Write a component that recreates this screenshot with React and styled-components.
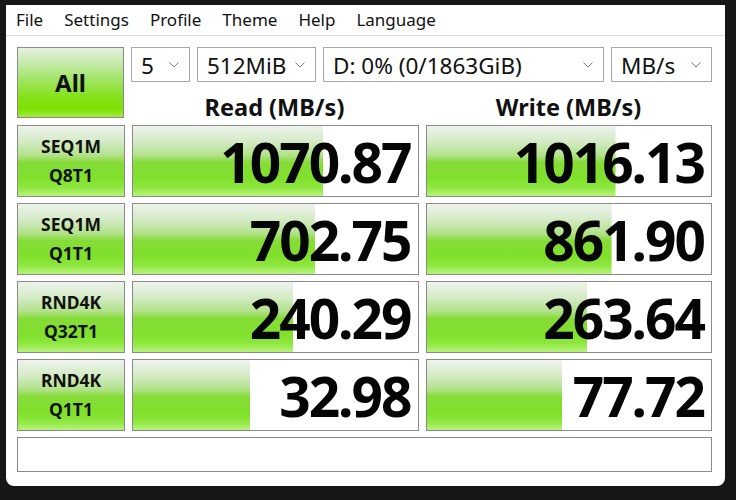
import React from 'react';
import styled, { createGlobalStyle } from 'styled-components';

const Global = createGlobalStyle`
  html, body { margin: 0; padding: 0; background: #161616; }
  body { width: 736px; height: 500px; overflow: hidden; font-family: "Noto Sans", "Open Sans", sans-serif; }
  * { box-sizing: border-box; }
`;

const Page = styled.div`
  display: flex;
  width: 736px;
  height: 500px;
  padding-top: 5px;
`;

const Window = styled.div`
  margin-left: 6px;
  width: 719px;
  height: 481px;
  background: #ffffff;
  border-radius: 0 0 8px 8px;
  display: flex;
  flex-direction: column;
  overflow: hidden;
`;

const MenuBar = styled.div`
  height: 31px;
  border-bottom: 1px solid #d9d9d9;
  display: flex;
  align-items: center;
`;

const MenuItem = styled.span`
  padding: 0 11px 0 10px;
  font-size: 17px;
  color: #111;
  line-height: 30px;
`;

const Content = styled.div`
  padding: 11px 13px 0 11px;
  display: flex;
  flex-direction: column;
`;

const Top = styled.div`
  display: flex;
  gap: 7px;
  height: 71px;
`;

const greenBtn = `
  linear-gradient(to bottom,
    #eef3ec 0%, #d4ebc6 22%, #b2e18a 42%, #86dc38 52%, #80e02a 75%, #8ee840 88%, #b8f27c 100%)
`;

const AllButton = styled.div`
  width: 108px;
  height: 71px;
  border: 1px solid #8a8a8a;
  background: linear-gradient(to bottom, #e4efe0 0%, #c8ebb0 20%, #a2e468 45%, #86e21c 70%, #7fe000 88%, #a0ec40 100%);
  display: flex;
  align-items: center;
  justify-content: center;
  font-size: 24px;
  font-weight: 700;
  color: #111;
`;

const RightTop = styled.div`
  flex: 1;
  display: flex;
  flex-direction: column;
`;

const ComboRow = styled.div`
  display: flex;
  gap: 7px;
  height: 35px;
`;

const Combo = styled.div`
  width: ${p => p.$w}px;
  height: 35px;
  border: 1px solid #a8a8a8;
  background: #fff;
  display: flex;
  align-items: center;
  padding: 1px 10px 0 9px;
  font-size: 22.5px;
  color: #111;
`;

const ComboText = styled.span`
  flex: 1;
  white-space: nowrap;
`;

const Chevron = () => (
  <svg width="10" height="6" viewBox="0 0 10 6">
    <polyline points="0.5,0.5 5,5 9.5,0.5" fill="none" stroke="#808080" strokeWidth="1" />
  </svg>
);

const HeaderRow = styled.div`
  display: grid;
  grid-template-columns: 1fr 1fr;
  gap: 7px;
  height: 36px;
`;

const Header = styled.div`
  display: flex;
  align-items: center;
  justify-content: center;
  font-size: 23.5px;
  font-weight: 700;
  color: #111;
  padding-top: 9px;
`;

const Grid = styled.div`
  margin-top: 7px;
  display: grid;
  grid-template-columns: 108px 1fr 1fr;
  grid-auto-rows: 72px;
  gap: 6px 7px;
`;

const Label = styled.div`
  border: 1px solid #8a8a8a;
  background: ${greenBtn};
  display: flex;
  flex-direction: column;
  align-items: center;
  justify-content: center;
  font-size: 17.5px;
  font-weight: 700;
  line-height: 29px;
  color: #111;
`;

const Cell = styled.div`
  border: 1px solid #8a8a8a;
  background-color: #fff;
  background-image: ${greenBtn};
  background-repeat: no-repeat;
  background-size: ${p => p.$fill}% 100%;
  display: flex;
  align-items: center;
  justify-content: flex-end;
  padding-right: 7px;
  font-size: 55px;
  font-weight: 700;
  letter-spacing: -2px;
  color: #050505;
`;

const Status = styled.div`
  grid-column: 1 / -1;
  height: 35px;
  border: 1px solid #8a8a8a;
  background: #fff;
`;

const rows = [
  { a: 'SEQ1M', b: 'Q8T1', r: '1070.87', rf: 66.8, w: '1016.13', wf: 66.4 },
  { a: 'SEQ1M', b: 'Q1T1', r: '702.75', rf: 63.9, w: '861.90', wf: 65.0 },
  { a: 'RND4K', b: 'Q32T1', r: '240.29', rf: 56.3, w: '263.64', wf: 56.5 },
  { a: 'RND4K', b: 'Q1T1', r: '32.98', rf: 41.2, w: '77.72', wf: 47.6 },
];

export default function App() {
  return (
    <>
      <Global />
      <Page>
        <Window>
          <MenuBar>
            {['File', 'Settings', 'Profile', 'Theme', 'Help', 'Language'].map(m => (
              <MenuItem key={m}>{m}</MenuItem>
            ))}
          </MenuBar>
          <Content>
            <Top>
              <AllButton>All</AllButton>
              <RightTop>
                <ComboRow>
                  <Combo $w={59}><ComboText>5</ComboText><Chevron /></Combo>
                  <Combo $w={119}><ComboText>512MiB</ComboText><Chevron /></Combo>
                  <Combo $w={281}><ComboText>D: 0% (0/1863GiB)</ComboText><Chevron /></Combo>
                  <Combo $w={101}><ComboText>MB/s</ComboText><Chevron /></Combo>
                </ComboRow>
                <HeaderRow>
                  <Header>Read (MB/s)</Header>
                  <Header>Write (MB/s)</Header>
                </HeaderRow>
              </RightTop>
            </Top>
            <Grid>
              {rows.map((r, i) => (
                <React.Fragment key={i}>
                  <Label><span>{r.a}</span><span>{r.b}</span></Label>
                  <Cell $fill={r.rf}>{r.r}</Cell>
                  <Cell $fill={r.wf}>{r.w}</Cell>
                </React.Fragment>
              ))}
              <Status />
            </Grid>
          </Content>
        </Window>
      </Page>
    </>
  );
}
